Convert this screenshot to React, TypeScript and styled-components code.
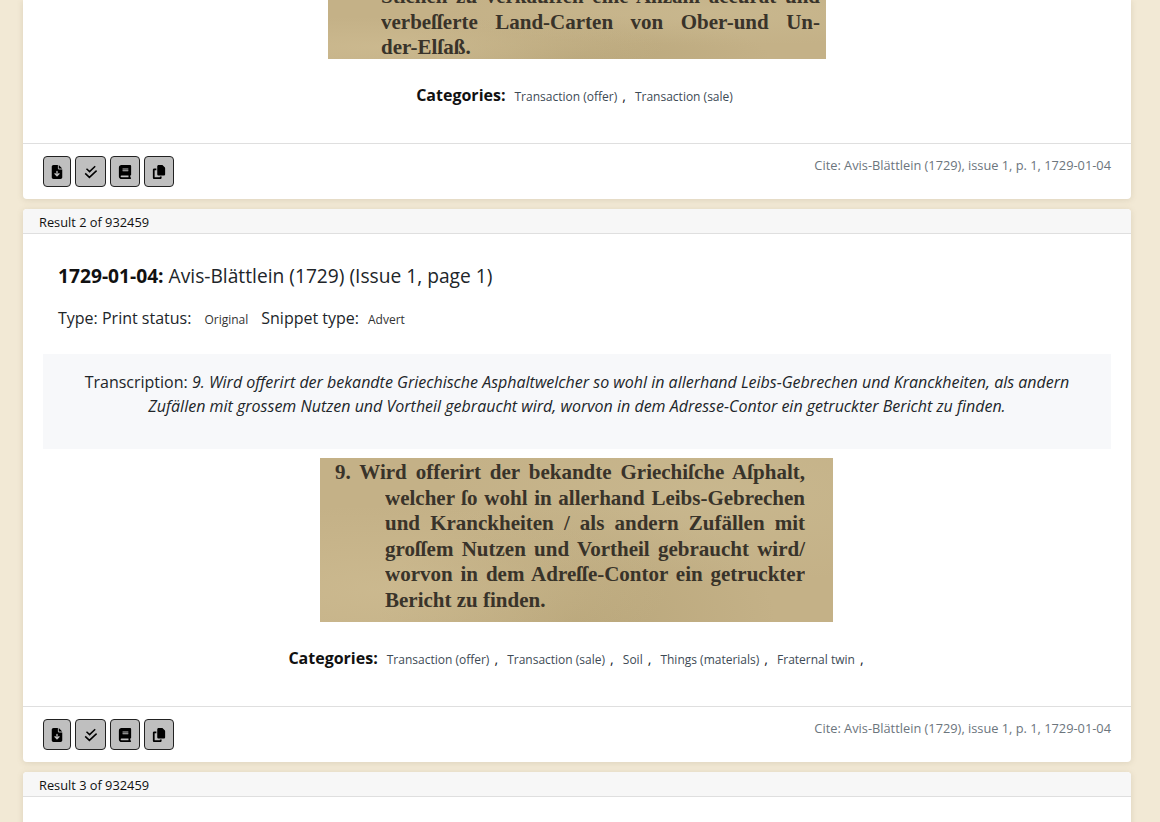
import { ReactNode } from "react";
import styled, { createGlobalStyle } from "styled-components";
import { FaFileArrowDown, FaBook, FaCopy } from "react-icons/fa6";

const GlobalStyle = createGlobalStyle`
  html, body {
    margin: 0;
    height: 822px;
    overflow: hidden;
    background: #f2e9d5;
    font-family: "Open Sans", sans-serif;
    color: #212529;
  }
  * { box-sizing: border-box; }
`;

const Results = styled.main`
  display: flex;
  flex-direction: column;
  gap: 10px;
  padding: 0 29px 0 23px;
  height: 822px;
  overflow: hidden;
`;

const Card = styled.article`
  background: #fff;
  border-radius: 4px;
  box-shadow: 0 1px 6px rgba(120, 105, 70, 0.18);
  flex-shrink: 0;
  overflow: hidden;
`;

const FirstCard = styled(Card)`
  border-radius: 0 0 4px 4px;
`;

const CardHeader = styled.header`
  height: 25px;
  padding-left: 16px;
  background: #f7f7f7;
  border-bottom: 1px solid #dfdfdf;
  font-size: 12.8px;
  line-height: 27px;
  color: #111;
`;

const CardBody = styled.div<{ $bottom: number }>`
  padding: 0 20px ${({ $bottom }) => $bottom}px;
`;

const Title = styled.h2`
  margin: 0;
  padding: 29px 15px 0;
  font-size: 19.2px;
  line-height: 26px;
  font-weight: 400;
  color: #212529;
  & strong { font-weight: 700; color: #111; }
`;

const MetaRow = styled.div`
  display: flex;
  align-items: baseline;
  padding: 18px 15px 0;
  font-size: 16px;
  line-height: 22px;
`;

const MetaValue = styled.span`
  font-size: 12px;
  margin: 0 13px;
  color: #333;
  &:last-child { margin: 0 0 0 9px; }
`;

const Transcription = styled.div`
  margin-top: 23px;
  height: 95px;
  padding: 16px 30px 0;
  background: #f7f8fa;
  font-size: 16px;
  line-height: 24px;
  text-align: center;
  color: #212529;
  & em { font-style: italic; }
`;

const Scan = styled.div<{ $width: number; $height: number; $mt: number; $ml: number; $end?: boolean }>`
  width: ${({ $width }) => $width}px;
  height: ${({ $height }) => $height}px;
  margin: ${({ $mt }) => $mt}px 0 0 ${({ $ml }) => $ml}px;
  padding: ${({ $end }) => ($end ? "0 6px 0 53px" : "2px 28px 0 15px")};
  display: flex;
  flex-direction: column;
  justify-content: ${({ $end }) => ($end ? "flex-end" : "flex-start")};
  overflow: hidden;
  background:
    radial-gradient(ellipse at 12% 80%, rgba(210, 192, 150, 0.5), transparent 45%),
    radial-gradient(ellipse at 78% 22%, rgba(205, 190, 150, 0.45), transparent 50%),
    radial-gradient(ellipse at 50% 100%, rgba(160, 142, 95, 0.3), transparent 55%),
    #c4b187;
  & > div:last-child { margin-bottom: ${({ $end }) => ($end ? -2 : 0)}px; }
`;

const ScanLine = styled.div<{ $indent: number; $last?: boolean }>`
  height: 25.6px;
  flex-shrink: 0;
  padding-left: ${({ $indent }) => $indent}px;
  font-family: "Liberation Serif", serif;
  font-weight: 700;
  font-size: 21px;
  line-height: 25.6px;
  color: #2a2620;
  white-space: nowrap;
  text-align: justify;
  text-align-last: ${({ $last }) => ($last ? "left" : "justify")};
  opacity: 0.9;
`;

const Categories = styled.div<{ $mt: number; $pr: number }>`
  margin-top: ${({ $mt }) => $mt}px;
  padding-right: ${({ $pr }) => $pr}px;
  display: flex;
  justify-content: center;
  align-items: baseline;
  line-height: 24px;
`;

const CategoryLabel = styled.strong`
  font-size: 16px;
  font-weight: 700;
  color: #111;
  margin-right: 9px;
`;

const Category = styled.span`
  font-size: 12px;
  color: #3d4a55;
`;

const Comma = styled.span<{ $tail?: boolean }>`
  font-size: 14.4px;
  color: #212529;
  margin: 0 ${({ $tail }) => ($tail ? 2 : 9)}px 0 5px;
`;

const CardFooter = styled.footer`
  height: 56px;
  border-top: 1px solid #dfdfdf;
  padding: 12px 20px 0;
  display: flex;
  justify-content: space-between;
  align-items: flex-start;
`;

const ButtonGroup = styled.div`
  display: flex;
  gap: 4px;
`;

const IconButton = styled.button<{ $width: number }>`
  width: ${({ $width }) => $width}px;
  height: 31px;
  padding: 0;
  display: flex;
  align-items: center;
  justify-content: center;
  background: #bfbfbf;
  border: 1px solid #222;
  border-radius: 4px;
  color: #000;
  font-size: 14px;
`;

const Cite = styled.div`
  font-size: 12.8px;
  line-height: 18px;
  color: #6c757d;
`;

const DoubleCheck = () => (
  <svg width="14" height="14" viewBox="0 0 14 14" fill="none" stroke="#000" strokeWidth="1.5">
    <path d="M2.5 3.8 L5.6 6.6 L11.2 1.2" />
    <path d="M1.2 8.4 L5.4 12.4 L12.6 5.6" />
  </svg>
);

const Footer = () => (
  <CardFooter>
    <ButtonGroup>
      <IconButton aria-label="Download" $width={28}><FaFileArrowDown /></IconButton>
      <IconButton aria-label="Select" $width={31}><DoubleCheck /></IconButton>
      <IconButton aria-label="Source" $width={30}><FaBook /></IconButton>
      <IconButton aria-label="Copy" $width={30}><FaCopy /></IconButton>
    </ButtonGroup>
    <Cite>Cite: Avis-Blättlein (1729), issue 1, p. 1, 1729-01-04</Cite>
  </CardFooter>
);

const CategoryList = ({ items, trailing, mt }: { items: string[]; trailing?: boolean; mt: number }) => {
  const list: ReactNode[] = items.map((item, i) => {
    const isLast = i === items.length - 1;
    return (
      <span key={item}>
        <Category>{item}</Category>
        {(!isLast || trailing) && <Comma $tail={isLast}>,</Comma>}
      </span>
    );
  });
  return (
    <Categories $mt={mt} $pr={trailing ? 0 : 5}>
      <CategoryLabel>Categories:</CategoryLabel>
      {list}
    </Categories>
  );
};

const secondScan = [
  "9.  Wird offerirt der bekandte Griechiſche Aſphalt,",
  "welcher ſo wohl in allerhand Leibs-Gebrechen",
  "und Kranckheiten / als andern Zufällen mit",
  "groſſem Nutzen und Vortheil gebraucht wird/",
  "worvon in dem Adreſſe-Contor ein getruckter",
  "Bericht zu finden.",
];

export default function App() {
  return (
    <>
      <GlobalStyle />
      <Results>
        <FirstCard>
          <CardBody $bottom={34}>
            <Scan $width={498} $height={59} $mt={0} $ml={285} $end>
              <ScanLine $indent={0}>Stichen zu verkauffen eine Anzahl accurat und</ScanLine>
              <ScanLine $indent={0}>verbeſſerte Land-Carten von Ober-und Un-</ScanLine>
              <ScanLine $indent={0} $last>der-Elſaß.</ScanLine>
            </Scan>
            <CategoryList items={["Transaction (offer)", "Transaction (sale)"]} mt={24} />
          </CardBody>
          <Footer />
        </FirstCard>

        <Card>
          <CardHeader>Result 2 of 932459</CardHeader>
          <CardBody $bottom={34}>
            <Title><strong>1729-01-04:</strong> Avis-Blättlein (1729) (Issue 1, page 1)</Title>
            <MetaRow>
              Type: Print status:
              <MetaValue>Original</MetaValue>
              Snippet type:
              <MetaValue>Advert</MetaValue>
            </MetaRow>
            <Transcription>
              Transcription: <em>9. Wird offerirt der bekandte Griechische Asphaltwelcher so wohl in allerhand Leibs-Gebrechen und Kranckheiten, als andern Zufällen mit grossem Nutzen und Vortheil gebraucht wird, worvon in dem Adresse-Contor ein getruckter Bericht zu finden.</em>
            </Transcription>
            <Scan $width={513} $height={164} $mt={9} $ml={277}>
              {secondScan.map((line, i) => (
                <ScanLine key={line} $indent={i === 0 ? 0 : 50} $last={i === secondScan.length - 1}>{line}</ScanLine>
              ))}
            </Scan>
            <CategoryList
              items={["Transaction (offer)", "Transaction (sale)", "Soil", "Things (materials)", "Fraternal twin"]}
              trailing
              mt={24}
            />
          </CardBody>
          <Footer />
        </Card>

        <Card>
          <CardHeader>Result 3 of 932459</CardHeader>
          <CardBody $bottom={100} />
        </Card>
      </Results>
    </>
  );
}
